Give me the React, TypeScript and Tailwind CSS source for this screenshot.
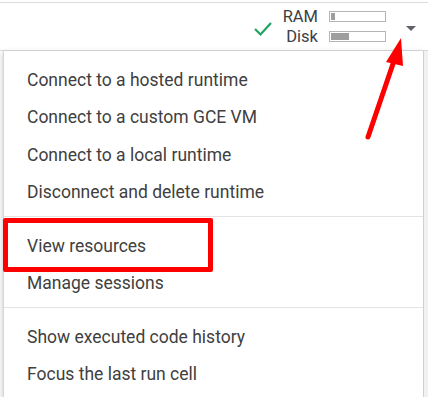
import React from "react";

const groups = [
  [
    "Connect to a hosted runtime",
    "Connect to a custom GCE VM",
    "Connect to a local runtime",
    "Disconnect and delete runtime",
  ],
  ["View resources", "Manage sessions"],
  ["Show executed code history", "Focus the last run cell"],
];

const usage = [
  { label: "RAM", fill: "w-[4px]" },
  { label: "Disk", fill: "w-[18px]" },
];

const App = () => {
  return (
    <div className="relative w-[428px] h-[397px] overflow-hidden bg-white font-['Roboto','Liberation_Sans',sans-serif]">
      <div className="h-[2px]" />
      <div className="h-[49px] border-t border-b border-[#dadce0] flex items-center justify-end pr-[12px]">
        <svg width="20" height="16" viewBox="0 0 20 16" className="mr-[10px] mt-[4px]">
          <polyline points="2,8 7.5,13.5 18,2" fill="none" stroke="#1ea362" strokeWidth="2.2" />
        </svg>
        <div className="grid grid-cols-[auto_auto] gap-x-[11px] items-center">
          {usage.map((u) => (
            <React.Fragment key={u.label}>
              <span className="text-[16.5px] leading-[20px] text-right text-[#3c4043]">{u.label}</span>
              <div className="w-[57px] h-[11px] border border-[#b5b5b5] bg-white p-[1px]">
                <div className={`${u.fill} h-full bg-[#9e9e9e]`} />
              </div>
            </React.Fragment>
          ))}
        </div>
        <div className="ml-[20px] mt-[3px] w-0 h-0 border-l-[5px] border-r-[5px] border-t-[5px] border-l-transparent border-r-transparent border-t-[#5f6368]" />
      </div>

      <div className="flex h-[346px]">
        <div className="ml-[3px] w-[420px] h-full bg-white border-l border-[#d6d6d6] shadow-[0_2px_6px_rgba(0,0,0,0.25)] pt-[10px]">
          {groups.map((items, gi) => (
            <div key={gi}>
              {gi > 0 && <div className="h-px bg-[#e3e3e3] mt-[5px] mb-[10px]" />}
              {items.map((item) => (
                <div key={item} className="h-[37.5px] flex items-center pl-[23px] text-[17.5px] text-[#404040]">
                  {item}
                </div>
              ))}
            </div>
          ))}
        </div>
        <div className="flex-1 bg-[#f1f1f1] border-l border-[#cfcfcf]" />
      </div>

      {/* annotation: red box */}
      <div className="absolute left-[3px] top-[218px] w-[210px] h-[54px] border-[5px] border-[#ff0000] rounded-[2px]" />

      {/* annotation: red arrow */}
      <svg className="absolute left-0 top-0" width="428" height="397" viewBox="0 0 428 397">
        <line x1="368" y1="137" x2="395" y2="58" stroke="#ff0000" strokeWidth="5" strokeLinecap="round" />
        <polygon points="401,38 386,62 403,66" fill="#ff0000" />
      </svg>
    </div>
  );
};

export default App;
